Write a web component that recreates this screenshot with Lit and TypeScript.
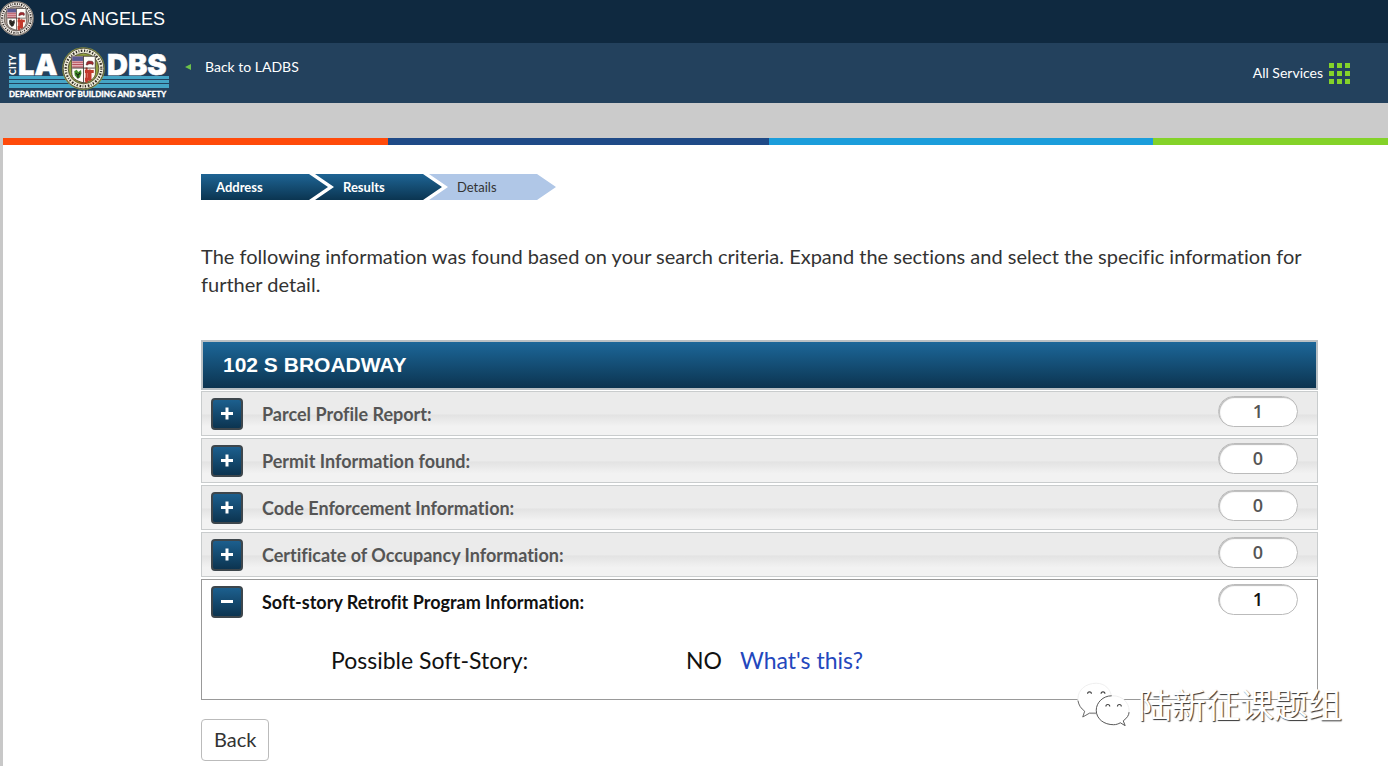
import { LitElement, html, svg, css } from "lit";
import { customElement, property, state } from "lit/decorators.js";

@customElement("city-seal")
class CitySeal extends LitElement {
  @property({ type: Boolean }) gold = false;

  static styles = css`
    :host { display: block; }
    svg { display: block; width: 100%; height: 100%; }
  `;

  render() {
    const ring = this.gold ? "#f0edd8" : "#f1ebe5";
    const edge = this.gold ? "#8f9a3c" : "#a39a93";
    const field = this.gold ? "#93a13c" : "#b3a59d";
    return html`<svg viewBox="0 0 42 42" role="img" aria-label="City of Los Angeles seal">
      <circle cx="21" cy="21" r="20.8" fill="${edge}" />
      <circle cx="21" cy="21" r="19.8" fill="${ring}" stroke="#3a342c" stroke-width=".7" />
      <circle cx="21" cy="21" r="17.4" fill="none" stroke="#2b2622" stroke-width="2.2" stroke-dasharray="1.2 1.5 .8 1.4 1.6 1.7" />
      <circle cx="21" cy="21" r="15" fill="${field}" stroke="#3a342c" stroke-width=".7" />
      <path d="M9.5 9H32.5V25C32.5 31 28 33 21 35C14 33 9.5 31 9.5 25Z" fill="#fffdf8" stroke="#38302d" stroke-width=".8" />
      <path d="M10 9.4H20.6V20.4H10Z" fill="#e2aeb4" />
      <path d="M10 12.4H20.6M10 14.8H20.6M10 17.2H20.6M10 19.6H20.6" stroke="#b5505c" stroke-width="1" />
      <path d="M10 9.4H20.6V13.6H10Z" fill="#5a5a92" />
      <path d="M23.5 17.5L24.3 14.6L26 13.6L29.6 13.9L30.8 15.6L30 17.6L28.6 16.6L26.2 16.7L25 17.6Z" fill="#a02a30" stroke="#3a2020" stroke-width=".4" />
      <path d="M12 23.5L14.5 22.3L15.8 24.4L18.6 22.4L19 26L17.4 30L14.6 30.4L12.4 27.6Z" fill="${this.gold ? "#3f8a2a" : "#35302c"}" />
      <path d="M13.4 25.4L15.6 27.6L17.6 25.2M15.6 27.6V31" fill="none" stroke="#171a12" stroke-width="1" />
      <path d="M21.4 20.8H32.1V25C32.1 30.6 28 32.6 21.4 34.6Z" fill="#fff5ec" />
      <path d="M22.4 22.4H31V25.4H28.8V32L22.4 34V30H25V25.4H22.4Z" fill="#c23a2c" />
      <path d="M24 20V35M27 22V33" stroke="#c23a2c" stroke-width="2" />
      <path d="M21 9V35M10 20.6H32" stroke="#38302d" stroke-width=".8" />
    </svg>`;
  }
}

@customElement("ladbs-logo")
class LadbsLogo extends LitElement {
  static styles = css`
    :host { display: block; position: relative; width: 162px; height: 52px; }
    svg { display: block; width: 100%; height: 100%; overflow: visible; }
    text { fill: #fff; font-family: Inter, sans-serif; font-weight: 900; }
    .big { font-size: 29px; stroke: #fff; stroke-width: .5; }
    .city { font-family: Lato, sans-serif; font-size: 9px; font-weight: 900; }
    .dept { font-family: Lato, sans-serif; font-size: 8px; font-weight: 900; stroke: #fff; stroke-width: .3; }
    city-seal { position: absolute; left: 54px; top: 0; width: 43px; height: 43px; }
  `;

  render() {
    return html`
      <svg viewBox="0 0 162 52" role="img" aria-label="LADBS">
        ${[29, 33, 37, 40].map((y) => svg`<rect x="1" y="${y}" width="160" height="${y === 40 ? 1 : 3}" fill="#45a5c6" />`)}
        <text class="city" transform="translate(8 28) rotate(-90)">CITY</text>
        <text class="big" x="10" y="28">LA</text>
        <text class="big" x="99" y="28">DBS</text>
        <text class="dept" x="1" y="50">DEPARTMENT OF BUILDING AND SAFETY</text>
      </svg>
      <city-seal gold></city-seal>
    `;
  }
}

interface Section {
  label: string;
  count: number;
}

@customElement("app-root")
class AppRoot extends LitElement {
  @state() private open = 4;

  private sections: Section[] = [
    { label: "Parcel Profile Report:", count: 1 },
    { label: "Permit Information found:", count: 0 },
    { label: "Code Enforcement Information:", count: 0 },
    { label: "Certificate of Occupancy Information:", count: 0 },
    { label: "Soft-story Retrofit Program Information:", count: 1 },
  ];

  static styles = css`
    * { box-sizing: border-box; }
    :host {
      display: block;
      position: relative;
      min-height: 100vh;
      background: #fff;
      color: #333;
      font-family: Lato, sans-serif;
      font-variant-ligatures: none;
    }
    a { text-decoration: none; }
    button { font: inherit; cursor: pointer; }
    .city-bar {
      display: flex;
      align-items: flex-start;
      gap: 6px;
      height: 43px;
      background: #0f2940;
      color: #fff;
      font: 18px/38px "Liberation Sans", sans-serif;
    }
    .city-bar city-seal { width: 35px; height: 35px; margin: 1px 0 0 -1px; }
    .dept-bar {
      display: flex;
      align-items: flex-start;
      height: 60px;
      padding: 4px 37px 0 8px;
      background: #23415d;
      font-size: 14px;
      line-height: 20px;
    }
    .dept-bar a { color: #fff; display: flex; align-items: center; }
    .back-link { gap: 14px; margin: 10px auto 0 15px; }
    .back-link svg { width: 6px; height: 6px; }
    .services { gap: 6px; margin-top: 15px; }
    .services svg { width: 22px; height: 22px; }
    .spacer { height: 35px; background: #cbcbcb; }
    .page { border-left: 3px solid #c8c8c8; min-height: calc(100vh - 138px); }
    .stripes { display: grid; grid-template-columns: 385fr 381fr 384fr 235fr; height: 7px; }
    .orange { background: #ff4a0a; }
    .navy { background: #1f4a87; }
    .sky { background: #1b9ddb; }
    .green { background: #84d229; }
    main { padding: 29px 70px 0 198px; }
    .steps { display: flex; margin: 0; padding: 0; list-style: none; font-size: 13px; line-height: 26px; }
    .steps li {
      width: 127px;
      padding-left: 28px;
      color: #fff;
      font-weight: 700;
      background: linear-gradient(#1e6494, #0b3551);
      clip-path: polygon(0 0, calc(100% - 19px) 0, 100% 50%, calc(100% - 19px) 100%, 0 100%, 19px 50%);
    }
    .steps li + li { margin-left: -13px; }
    .steps li:first-child {
      padding-left: 15px;
      clip-path: polygon(0 0, calc(100% - 19px) 0, 100% 50%, calc(100% - 19px) 100%, 0 100%);
    }
    .steps li.current { background: #b0c7e7; color: #333; font-weight: 400; }
    .intro { margin: 42px 0; font-size: 20px; line-height: 28px; }
    h1 {
      margin: 0 0 1px;
      padding-left: 20px;
      border: 2px solid #b9c0c4;
      background: linear-gradient(#1c6799, #0c3450);
      color: #fff;
      font: bold 21px/46px "Liberation Sans", sans-serif;
    }
    .section { border: 1px solid #c9cccd; margin-bottom: 2px; background: linear-gradient(#ebebeb 50%, #e3e3e3 54%, #f2f2f2 80%); }
    .section.open { border-color: #999; background: #fff; color: #111; margin-bottom: 0; }
    .head { display: flex; align-items: center; height: 43px; padding: 0 19px 0 9px; color: #555; font-size: 18px; font-weight: 700; }
    .open .head { color: #111; }
    .toggle {
      width: 32px;
      height: 32px;
      padding: 0;
      margin-right: 19px;
      border: 2px solid #3d464c;
      border-radius: 4px;
      background: linear-gradient(#1c5f8e, #0c3450);
    }
    .toggle svg { display: block; width: 28px; height: 28px; }
    .label { flex: 1; }
    .count {
      width: 80px;
      height: 31px;
      margin-bottom: 4px;
      border: 1px solid #bbb;
      border-radius: 16px;
      box-shadow: inset 1px 1px 1px #bbb;
      background: #fff;
      text-align: center;
      font: 600 18px/29px "Open Sans", sans-serif;
    }
    .detail { display: flex; padding: 20px 0 22px 129px; font-size: 23px; line-height: 34px; }
    .detail dl { display: flex; margin: 0; }
    .detail dt { width: 355px; }
    .detail dd { margin: 0 18px 0 0; }
    .detail a { color: #2347bd; }
    .back {
      margin: 19px 0 5px;
      padding: 0 12px 2px;
      border: 1px solid #bbb;
      border-radius: 4px;
      background: #fff;
      color: #333;
      font-size: 20px;
      line-height: 38px;
    }
    .mark {
      position: absolute;
      right: 46px;
      bottom: 40px;
      display: flex;
      align-items: center;
      gap: 8px;
      color: #fff;
      font: 34px/44px "Noto Sans CJK SC", sans-serif;
      text-shadow: 1px 1px 1px #333;
      pointer-events: none;
    }
    .mark svg { width: 54px; height: 45px; }
  `;

  private toggle(i: number) {
    this.open = this.open === i ? -1 : i;
  }

  render() {
    return html`
      <header>
        <div class="city-bar"><city-seal></city-seal><span>LOS ANGELES</span></div>
        <div class="dept-bar">
          <ladbs-logo></ladbs-logo>
          <a class="back-link" href="#ladbs">
            <svg viewBox="0 0 6 6" aria-hidden="true"><path d="M0 3L6 0V6Z" fill="#6cc04a" /></svg>
            <span>Back to LADBS</span>
          </a>
          <a class="services" href="#services">
            <span>All Services</span>
            <svg viewBox="0 0 22 22" aria-hidden="true">
              ${[1, 9, 17].map((y) => [0, 8, 16].map((x) => svg`<rect x="${x}" y="${y}" width="5" height="5" fill="#84d229" />`))}
            </svg>
          </a>
        </div>
      </header>
      <div class="spacer"></div>
      <div class="page">
        <div class="stripes">
          <div class="orange"></div><div class="navy"></div><div class="sky"></div><div class="green"></div>
        </div>
        <main>
          <nav aria-label="Progress">
            <ol class="steps"><li>Address</li><li>Results</li><li class="current" aria-current="step">Details</li></ol>
          </nav>
          <p class="intro">The following information was found based on your search criteria. Expand the sections and select the specific information for further detail.</p>
          <h1>102 S BROADWAY</h1>
          ${this.sections.map((s, i) => this.section(s, i))}
          <button class="back" type="button">Back</button>
        </main>
      </div>
      <div class="mark">
        <svg viewBox="0 0 56 46" aria-hidden="true">
          <g fill="#fff">
            <path d="M21 2C10 2 2 9 2 18C2 24 5 28 9 31L7 37L14 33C17 34 20 34 23 34L37 17C36 8 30 2 21 2Z" stroke="#eee" />
            <path d="M2 20C3 25 5 28 9 31L7 37L14 33L22 33" fill="none" stroke="#666" />
            <path d="M38 15C28 15 21 22 21 30C21 39 29 45 39 45C42 45 44 44 46 43L51 46L49 41C53 38 55 35 55 30C55 22 48 15 38 15Z" stroke="#eee" />
            <path d="M37 15C28 15 21 22 21 30C21 39 29 45 39 45C42 45 44 44 46 43L51 46L49 41C53 38 55 35 55 32" fill="none" stroke="#555" />
          </g>
          <g fill="none" stroke="#444" stroke-width="1.2">
            <path d="M12 13Q12 11 14 11Q16 11 16 13M26 13Q26 11 28 11Q30 11 30 13M31 26Q31 24 33 24Q35 24 35 26M43 26Q43 24 45 24Q47 24 47 26" />
          </g>
        </svg>
        <span>陆新征课题组</span>
      </div>
    `;
  }

  private section(s: Section, i: number) {
    const open = i === this.open;
    return html`
      <section class="section ${open ? "open" : ""}">
        <div class="head">
          <button class="toggle" type="button" aria-expanded="${open}" aria-labelledby="label-${i}" @click=${() => this.toggle(i)}>
            <svg viewBox="0 0 28 28" aria-hidden="true"><path d="${open ? "M8 13.5H20" : "M8 13.5H20M14 7.5V19.5"}" stroke="#fff" stroke-width="3" /></svg>
          </button>
          <span class="label" id="label-${i}">${s.label}</span>
          <span class="count">${s.count}</span>
        </div>
        ${open && i === 4
          ? html`<div class="detail">
              <dl><dt>Possible Soft-Story:</dt><dd>NO</dd></dl>
              <a href="#soft-story">What's this?</a>
            </div>`
          : ""}
      </section>
    `;
  }
}
